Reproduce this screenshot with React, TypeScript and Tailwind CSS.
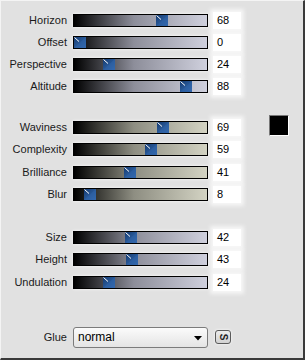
import React from "react";

type Row = { label: string; value: number };

const g1: Row[] = [
  { label: "Horizon", value: 68 },
  { label: "Offset", value: 0 },
  { label: "Perspective", value: 24 },
  { label: "Altitude", value: 88 },
];
const g2: Row[] = [
  { label: "Waviness", value: 69 },
  { label: "Complexity", value: 59 },
  { label: "Brilliance", value: 41 },
  { label: "Blur", value: 8 },
];
const g3: Row[] = [
  { label: "Size", value: 42 },
  { label: "Height", value: 43 },
  { label: "Undulation", value: 24 },
];

function Thumb({ value }: { value: number }) {
  const left = Math.round((value / 100) * 121);
  return (
    <svg
      width="12"
      height="11"
      viewBox="0 0 12 11"
      className="absolute top-0"
      style={{ left }}
    >
      <defs>
        <linearGradient id="tg" x1="0" y1="0" x2="1" y2="1">
          <stop offset="0" stopColor="#143a70" />
          <stop offset="1" stopColor="#3c74ba" />
        </linearGradient>
      </defs>
      <rect x="0" y="0" width="12" height="11" fill="url(#tg)" />
      <polygon points="0,11 12,11 12,0" fill="#2f62a6" opacity="0.6" />
      <line x1="0.5" y1="0.5" x2="5" y2="4.5" stroke="#ffffff" strokeWidth="1" />
    </svg>
  );
}

function SliderRow({
  row,
  tone,
  h,
  extra,
}: {
  row: Row;
  tone: "blue" | "beige";
  h: "a" | "b";
  extra?: React.ReactNode;
}) {
  return (
    <div className={"flex items-center " + (h === "a" ? "h-[22px]" : "h-[22.5px]")}>
      <div className="w-[66px] text-right text-[11px] leading-none text-[#1a1a1a]">
        {row.label}
      </div>
      <div
        className={
          "relative ml-[6px] h-[13px] w-[135px] border border-black shadow-[0_0_3px_rgba(255,255,255,0.9)] " +
          (tone === "blue"
            ? "bg-[linear-gradient(to_right,#000000,#8d8e9a_45%,#cfd0dd)]"
            : "bg-[linear-gradient(to_right,#000000,#8e8e82_45%,#d3d3c3)]")
        }
      >
        <Thumb value={row.value} />
      </div>
      <div className="ml-[5px] flex h-[17px] w-[28px] items-center bg-white pl-[4px] text-[11px] leading-none text-black shadow-[0_0_4px_3px_rgba(255,255,255,0.7)]">
        {row.value}
      </div>
      {extra}
    </div>
  );
}

export default function App() {
  return (
    <div
      className="flex h-[360px] w-[305px] flex-col border-b-2 border-r-2 border-l border-t border-b-[#3a3a3a] border-r-[#3a3a3a] border-l-[#f4f4f4] border-t-[#f4f4f4] bg-[#e1e1e1]"
      style={{ fontFamily: '"Liberation Sans", Arial, sans-serif' }}
    >
      <div className="flex flex-col pt-[8px]">
        {g1.map((r) => (
          <SliderRow key={r.label} row={r} tone="blue" h="a" />
        ))}
      </div>
      <div className="mt-[19px] flex flex-col">
        {g2.map((r, i) => (
          <SliderRow
            key={r.label}
            row={r}
            tone="beige"
            h="b"
            extra={
              i === 0 ? (
                <div className="ml-[28px] -mt-[3px] h-[21px] w-[20px] border-b border-r border-b-white border-r-white border-t border-l border-t-[#777] border-l-[#777] bg-black" />
              ) : null
            }
          />
        ))}
      </div>
      <div className="mt-[20px] flex flex-col">
        {g3.map((r) => (
          <SliderRow key={r.label} row={r} tone="blue" h="b" />
        ))}
      </div>
      <div className="mt-[33px] flex items-center">
        <div className="w-[66px] text-right text-[11px] leading-none text-[#1a1a1a]">
          Glue
        </div>
        <div className="relative ml-[6px] flex h-[21px] w-[135px] items-center rounded-[3px] border border-[#7b7b7b] bg-[linear-gradient(to_bottom,#fbfbfb,#e4e4e4)] pl-[4px] text-[12px] leading-none text-black">
          normal
          <svg
            width="8"
            height="5"
            viewBox="0 0 8 5"
            className="absolute right-[5px] top-[8px]"
          >
            <polygon points="0,0 8,0 4,4.5" fill="#000" />
          </svg>
        </div>
        <div className="ml-[7px] flex h-[14px] w-[16px] items-center justify-center rounded-[3px] border border-[#5a5a5a] bg-[linear-gradient(to_bottom,#ececec,#d2d2d2)] shadow-[0_0_3px_rgba(255,255,255,0.9)]">
          <span className="inline-block rotate-90 text-[10px] font-bold leading-none text-[#222]">
            S
          </span>
        </div>
      </div>
    </div>
  );
}
